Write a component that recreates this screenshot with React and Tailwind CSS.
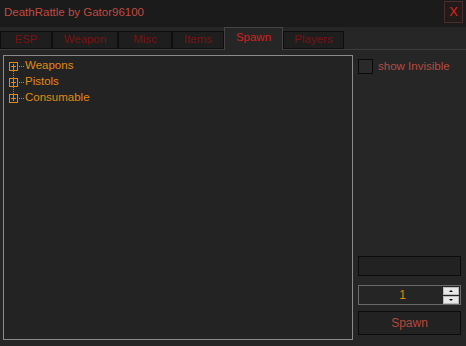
import { useState } from 'react'

const TABS = ['ESP', 'Weapon', 'Misc', 'Items', 'Spawn', 'Players']
const TAB_W = ['w-[52px]', 'w-[66px]', 'w-[54px]', 'w-[52px]', 'w-[59px]', 'w-[61px]']
const NODES = ['Weapons', 'Pistols', 'Consumable']

const PlusBox = () => (
  <span className="w-[9px] h-[9px] border border-[#e08a10] flex items-center justify-center relative shrink-0">
    <span className="absolute w-[5px] h-px bg-[#e08a10]" />
    <span className="absolute h-[5px] w-px bg-[#e08a10]" />
  </span>
)

const App = () => {
  const [active, setActive] = useState('Spawn')
  const [showInvisible, setShowInvisible] = useState(false)
  const [count, setCount] = useState(1)

  return (
    <div className="w-[466px] h-[346px] bg-[#262626] flex flex-col font-['Liberation_Sans',sans-serif] overflow-hidden">
      <div className="h-[27px] bg-[#1b1b1b] flex items-center justify-between pl-[4px] pr-[3px] shrink-0">
        <span className="text-[11.5px] text-[#c04a42] mt-[-2px]">DeathRattle by Gator96100</span>
        <button className="w-[19px] h-[22px] mt-[-3px] border border-[#4a2c2c] bg-[#231a1a] text-[#e02020] text-[13px] flex items-center justify-center">
          X
        </button>
      </div>
      <div className="h-[24px] flex items-end border-b border-[#3c3c3c] pl-0 shrink-0 mt-[-1px]">
        {TABS.map((t, i) =>
          t === active ? (
            <button
              key={t}
              onClick={() => setActive(t)}
              className={`${TAB_W[i]} h-[23px] mb-[-1px] bg-[#262626] border border-b-0 border-[#444] text-[#d42020] text-[11.5px] flex items-center justify-center pb-[2px]`}
            >
              {t}
            </button>
          ) : (
            <button
              key={t}
              onClick={() => setActive(t)}
              className={`${TAB_W[i]} h-[18px] bg-[#1e1e1e] border border-[#0e0e0e] text-[#7a1212] text-[11.5px] flex items-center justify-center`}
            >
              {t}
            </button>
          )
        )}
      </div>
      <div className="flex-1 flex pl-[3px] pr-[5px] pt-[5px] pb-[6px] gap-[5px]">
        <div className="w-[350px] border border-[#8a8a8a] bg-[#232323] pt-[2px] pl-[5px]">
          {NODES.map((n, i) => (
            <div key={n} className="h-[16px] flex items-center relative">
              {i < NODES.length - 1 && (
                <span className="absolute left-[4px] top-[11px] h-[11px] border-l border-dotted border-[#8a8a8a]" />
              )}
              <PlusBox />
              <span className="w-[5px] border-t border-dotted border-[#8a8a8a] mx-[1px]" />
              <span className="text-[11.5px] text-[#e08a10] leading-none">{n}</span>
            </div>
          ))}
        </div>
        <div className="flex-1 flex flex-col pb-[5px]">
          <label className="flex items-center gap-[5px] mt-[3px] cursor-pointer">
            <input
              type="checkbox"
              checked={showInvisible}
              onChange={e => setShowInvisible(e.target.checked)}
              className="hidden"
            />
            <span className="w-[15px] h-[15px] border border-[#0a0a0a] bg-[#2a2a2a]" />
            <span className="text-[11.5px] text-[#b84a42]">show Invisible</span>
          </label>
          <div className="flex-1" />
          <div className="h-[20px] border border-[#0c0c0c] bg-[#222]" />
          <div className="h-[20px] mt-[9px] border border-[#6a6a6a] bg-[#252525] flex items-center relative">
            <span className="flex-1 text-center text-[12px] text-[#e8840c] pr-[14px]">{count}</span>
            <div className="absolute right-[1px] top-[1px] flex flex-col gap-px">
              <button
                onClick={() => setCount(count + 1)}
                className="w-[16px] h-[8px] bg-[#e8e8e8] border border-[#bbb] flex items-center justify-center"
              >
                <span className="w-0 h-0 border-l-[2px] border-r-[2px] border-b-[2px] border-l-transparent border-r-transparent border-b-black" />
              </button>
              <button
                onClick={() => setCount(Math.max(0, count - 1))}
                className="w-[16px] h-[8px] bg-[#e8e8e8] border border-[#bbb] flex items-center justify-center"
              >
                <span className="w-0 h-0 border-l-[2px] border-r-[2px] border-t-[2px] border-l-transparent border-r-transparent border-t-black" />
              </button>
            </div>
          </div>
          <button className="h-[24px] mt-[6px] border border-[#0c0c0c] bg-[#222] text-[12px] text-[#b4473a]">
            Spawn
          </button>
        </div>
      </div>
    </div>
  )
}

export default App
